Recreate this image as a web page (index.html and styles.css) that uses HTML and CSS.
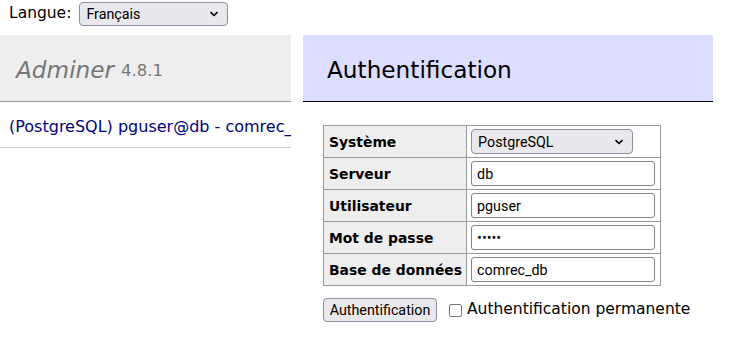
FILE: index.html
```html
<!DOCTYPE html>
<html lang="fr">
<head>
    <meta charset="UTF-8">
    <meta name="viewport" content="width=device-width, initial-scale=1.0">
    <title>Authentification - Adminer</title>
    <link rel="stylesheet" href="styles.css">
</head>
<body>

<form class="lang">
    <label for="lang">Langue:</label>
    <select id="lang" class="dropdown lang-select">
        <option>Français</option>
    </select>
</form>

<div class="layout">
    <div class="menu">
        <h1>
            <a class="brand" href="#">Adminer</a>
            <span class="version">4.8.1</span>
        </h1>
        <ul class="logins">
            <li><a href="#">(PostgreSQL) pguser@db - comrec_db</a></li>
        </ul>
    </div>

    <div class="content">
        <h2>Authentification</h2>

        <form class="login">
            <table class="login-table">
                <tr>
                    <th>Système</th>
                    <td>
                        <select class="dropdown field-select">
                            <option>PostgreSQL</option>
                        </select>
                    </td>
                </tr>
                <tr>
                    <th>Serveur</th>
                    <td><input class="field" type="text" value="db"></td>
                </tr>
                <tr>
                    <th>Utilisateur</th>
                    <td><input class="field" type="text" value="pguser"></td>
                </tr>
                <tr>
                    <th>Mot de passe</th>
                    <td><input class="field" type="password" value="hello"></td>
                </tr>
                <tr>
                    <th>Base de données</th>
                    <td><input class="field" type="text" value="comrec_db"></td>
                </tr>
            </table>

            <div class="submit-row">
                <input class="submit" type="submit" value="Authentification">
                <label class="permanent">
                    <input class="check" type="checkbox">Authentification permanente
                </label>
            </div>
        </form>
    </div>
</div>

</body>
</html>
```

FILE: styles.css
```css
body {
    margin: 0;
    color: #000;
    background: #fff;
    font: 15.5px/1.25 "DejaVu Sans", Verdana, sans-serif;
}

a {
    color: navy;
    text-decoration: none;
}

select, input, button {
    font-family: Roboto, "Liberation Sans", Arial, sans-serif;
    font-size: 14.3px;
    color: #000;
}

/* shared control look */

.dropdown {
    appearance: none;
    -webkit-appearance: none;
    margin: 0;
    padding: 0 24px 0 6px;
    border: 1px solid #8f8f9d;
    border-radius: 4px;
    background-color: #e9e9ed;
    background-image: url("data:image/svg+xml;utf8,<svg xmlns='http://www.w3.org/2000/svg' width='10' height='6' viewBox='0 0 10 6'><path d='M1.5 1.2 5 4.5 8.5 1.2' fill='none' stroke='black' stroke-width='1.6'/></svg>");
    background-repeat: no-repeat;
    background-position: right 8px center;
}

/* language bar */

.lang {
    display: flex;
    align-items: flex-start;
    gap: 8px;
    height: 35px;
    padding: 2px 0 0 9px;
    box-sizing: border-box;
}

.lang label {
    line-height: 23px;
}

.lang-select {
    width: 149px;
    height: 24px;
}

/* two columns */

.layout {
    display: flex;
    align-items: flex-start;
}

.menu {
    width: 291px;
    flex-shrink: 0;
}

.content {
    width: 410px;
    margin-left: 12px;
}

/* left menu */

h1 {
    margin: 0;
    height: 67px;
    padding: 2px 16px 0;
    box-sizing: border-box;
    display: flex;
    align-items: center;
    gap: 7px;
    font-size: 23.2px;
    font-weight: normal;
    background: #eee;
    border-bottom: 1px solid #999;
}

.brand {
    color: #777;
    font-style: italic;
}

.version {
    color: #777;
    font-size: 16.5px;
    padding-top: 4px;
}

.logins {
    list-style: none;
    margin: 0;
    padding: 15px 0 10px 9px;
    border-bottom: 1px solid #ccc;
    white-space: nowrap;
    overflow: hidden;
    font-size: 16px;
}

/* right content */

h2 {
    margin: 0;
    height: 67px;
    padding: 2px 24px 0;
    box-sizing: border-box;
    display: flex;
    align-items: center;
    font-size: 23.2px;
    font-weight: normal;
    background: #ddf;
    border-bottom: 1px solid #000;
}

.login {
    padding-left: 20px;
}

.login-table {
    margin-top: 23px;
    border-collapse: collapse;
    font-size: 13.9px;
}

.login-table th,
.login-table td {
    height: 32px;
    padding: 0 4px;
    border: 1px solid #999;
    box-sizing: border-box;
    white-space: nowrap;
}

.login-table th {
    width: 143px;
    padding: 3px 4px 0 5px;
    text-align: left;
    background: #eee;
}

.login-table td {
    width: 194px;
}

.field-select {
    display: block;
    width: 162px;
    height: 25px;
}

.field {
    display: block;
    width: 184px;
    height: 25px;
    margin: 0;
    padding: 1px 5px;
    box-sizing: border-box;
    border: 1px solid #858585;
    border-radius: 3px;
    background: #fff;
}

.submit-row {
    display: flex;
    align-items: center;
    gap: 12px;
    margin-top: 12px;
}

.submit {
    width: 114px;
    height: 24px;
    margin: 0;
    padding: 0;
    border: 1px solid #8f8f9d;
    border-radius: 4px;
    background: #e9e9ed;
}

.permanent {
    display: flex;
    align-items: center;
}

.check {
    appearance: none;
    -webkit-appearance: none;
    margin: 0 5px 0 0;
    width: 13px;
    height: 13px;
    border: 1px solid #767676;
    border-radius: 2px;
    background: #fff;
}
```
